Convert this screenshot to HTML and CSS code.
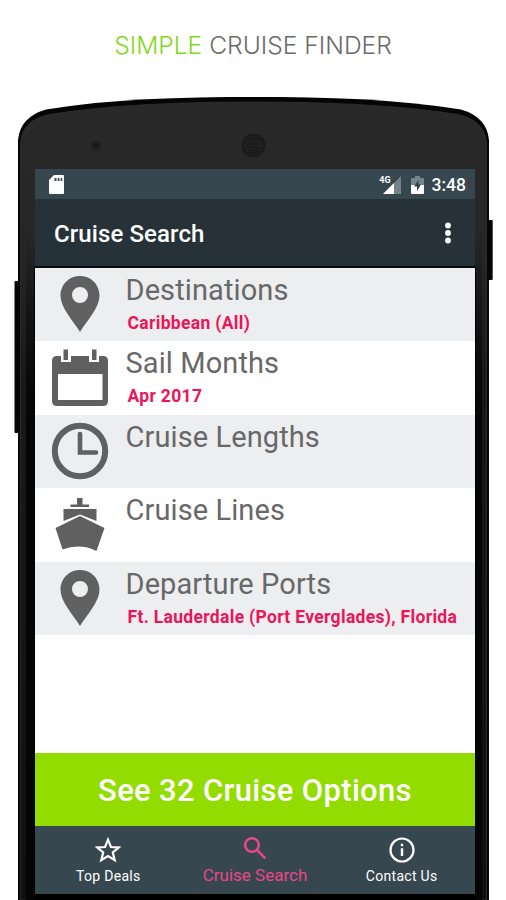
FILE: index.html
```
<!DOCTYPE html>
<html lang="en">
<head>
<meta charset="utf-8">
<title>Simple Cruise Finder</title>
<link rel="stylesheet" href="styles.css">
</head>
<body>
<svg class="device" viewBox="0 0 506 900" aria-hidden="true">
  <defs>
    <linearGradient id="body" x1="0" y1="97" x2="0" y2="900" gradientUnits="userSpaceOnUse">
      <stop offset="0" stop-color="#292929"/><stop offset=".2" stop-color="#262626"/><stop offset=".35" stop-color="#191919"/><stop offset="1" stop-color="#101010"/>
    </linearGradient>
    <linearGradient id="side" x1="0" y1="230" x2="0" y2="420" gradientUnits="userSpaceOnUse">
      <stop offset="0" stop-color="#050505" stop-opacity="0"/><stop offset="1" stop-color="#050505"/>
    </linearGradient>
  </defs>
  <rect x="14.5" y="281" width="6" height="152" rx="1" fill="#050505"/>
  <rect x="487" y="220" width="5.700" height="60" rx="1" fill="#080808"/>
  <path d="M18 900V140Q20 117 46 109.500C110 99 180 97 253.500 97S397 99 461 109.500Q487 117 489 140V900Z" fill="#050505"/>
  <path d="M20.500 900V142Q23 120 49 114.500C110 105 180 102 253.500 102S397 105 458 114.500Q484 120 486.500 142V900Z" fill="url(#body)" stroke="#303030" stroke-width=".8"/>
  <path d="M26 230H35V900H26ZM475 230H482V900H475Z" fill="url(#side)"/>
  <path d="M34 266H476V900H34Z" fill="#000"/>
  <circle cx="96" cy="145.500" r="5" fill="#202020"/><circle cx="96" cy="145.500" r="2.500" fill="#191919"/>
  <circle cx="253.500" cy="145.500" r="12" fill="#1b1b1b"/>
  <g fill="none" stroke="#2c2c2c" stroke-dasharray="1.500 2.500"><circle cx="253.500" cy="145.500" r="9"/><circle cx="253.500" cy="145.500" r="6"/><path d="M244 145.500H263M247 149H260M247 142H260"/></g>
</svg>
<h1 class="headline"><span class="headline-accent">SIMPLE</span> CRUISE FINDER</h1>
<main class="screen">
  <div class="status">
    <svg class="sd" viewBox="0 0 15 19"><path d="M5 0H14Q15 0 15 1V18Q15 19 14 19H1Q0 19 0 18V5Z" fill="#fff"/><path d="M5.500 3H7.500V6H5.500ZM8.700 3H10.500V6H8.700ZM11.700 3H13.300V6H11.700Z" fill="#37474f"/></svg>
    <span class="signal"><span class="network">4G</span><svg viewBox="0 0 18 18"><path d="M18 0V18H0Z" fill="#74828a"/><path d="M11 7V18H0Z" fill="#fff"/></svg></span>
    <svg class="battery" viewBox="0 0 13 18"><path d="M4 0H9V2H12Q13 2 13 3V9H0V3Q0 2 1 2H4Z" fill="#77848a"/><path d="M0 9H13V17Q13 18 12 18H1Q0 18 0 17Z" fill="#fff"/><path d="M7.500 4 3 10.500H6V15L10 8.500H7.500Z" fill="#33424a"/></svg>
    <span class="clock">3:48</span>
  </div>
  <header class="appbar"><h2 class="appbar-title">Cruise Search</h2><svg class="more" viewBox="0 0 6 22"><g fill="#fff"><circle cx="3" cy="3.500" r="2.900"/><circle cx="3" cy="11" r="2.900"/><circle cx="3" cy="18.500" r="2.900"/></g></svg></header>
  <ul class="options">
    <li class="option"><svg class="icon" viewBox="0 0 60 60"><path fill-rule="evenodd" d="M30 2C19 2 10.500 10.700 10.500 21.500C10.500 34 23.500 47 30 58C36.500 47 49.500 34 49.500 21.500C49.500 10.700 41 2 30 2ZM30 13A8 8 0 1 1 30 29A8 8 0 1 1 30 13Z"/></svg><div class="copy"><div class="name">Destinations</div><div class="value">Caribbean (All)</div></div></li>
    <li class="option"><svg class="icon" viewBox="0 0 60 60"><path fill-rule="evenodd" d="M7 9H11V15H21V9H39V15H49V9H53Q58 9 58 14V54Q58 59 53 59H7Q2 59 2 54V14Q2 9 7 9ZM8 27V53H52.500V27Z"/><path d="M13.500 2.500H18V13H13.500ZM42 2.500H46.500V13H42Z"/></svg><div class="copy"><div class="name">Sail Months</div><div class="value">Apr 2017</div></div></li>
    <li class="option"><svg class="icon" viewBox="0 0 60 60"><circle cx="30" cy="30" r="25.200" fill="none" stroke="#606060" stroke-width="6"/><path d="M30 13V31.500H46" fill="none" stroke="#606060" stroke-width="4.600" stroke-linecap="round"/></svg><div class="copy"><div class="name">Cruise Lengths</div></div></li>
    <li class="option"><svg class="icon" viewBox="0 0 60 60"><path d="M27 4H32.500V10.500H39V13H20.500V10.500H27ZM13.500 15H46.500V27L30 20.500 13.500 27ZM30 22 54.500 34 46.500 57Q30 49 12.500 55.500L5.500 34Z"/></svg><div class="copy"><div class="name">Cruise Lines</div></div></li>
    <li class="option"><svg class="icon" viewBox="0 0 60 60"><path fill-rule="evenodd" d="M30 2C19 2 10.500 10.700 10.500 21.500C10.500 34 23.500 47 30 58C36.500 47 49.500 34 49.500 21.500C49.500 10.700 41 2 30 2ZM30 13A8 8 0 1 1 30 29A8 8 0 1 1 30 13Z"/></svg><div class="copy"><div class="name">Departure Ports</div><div class="value">Ft. Lauderdale (Port Everglades), Florida</div></div></li>
  </ul>
  <button class="cta">See 32 Cruise Options</button>
  <nav class="tabs">
    <a class="tab"><svg class="star" viewBox="0 0 24 24"><path d="m12 2.500 2.700 6.700 7.200.5-5.500 4.600 1.800 7L12 17.500l-6.200 3.800 1.800-7-5.500-4.600 7.200-.5Z" fill="none" stroke="#fff" stroke-width="2"/></svg><span>Top Deals</span></a>
    <a class="tab tab-active"><svg class="search" viewBox="0 0 24 24"><g fill="none" stroke="#e8478b" stroke-width="2.300"><circle cx="9.200" cy="9.200" r="6.300"/><path d="m14 14 7.500 7.500"/></g></svg><span>Cruise Search</span></a>
    <a class="tab"><svg class="info" viewBox="0 0 26 26"><circle cx="13" cy="13" r="11.500" fill="none" stroke="#fff" stroke-width="2.200"/><path d="M11.800 6.800H14.200V9.200H11.800ZM11.800 11.200H14.200V19H11.800Z" fill="#fff"/></svg><span>Contact Us</span></a>
  </nav>
</main>
</body>
</html>
```

FILE: styles.css
```
* { box-sizing: border-box; }
body { margin: 0; width: 506px; height: 900px; overflow: hidden; background: #fff; font-family: Roboto, sans-serif; }
svg { display: block; flex: none; }
h1, h2, ul { margin: 0; padding: 0; font-weight: 400; }
.device { position: absolute; inset: 0; width: 506px; height: 900px; z-index: -1; }
.headline { height: 169px; padding-top: 30px; text-align: center; font: 300 24.600px/31px Inter, sans-serif; color: #6b6b6b; white-space: nowrap; }
.headline-accent { color: #83d71c; }
.screen { width: 440px; height: 725px; margin-left: 35px; display: flex; flex-direction: column; background: #fff; }
.status { height: 30px; display: flex; align-items: center; background: #37474f; padding: 1px 9px 0 14px; color: #fff; }
.sd { width: 15px; height: 19px; }
.signal { display: flex; margin-left: auto; margin-right: 10px; }
.signal svg { width: 18px; height: 18px; }
.network { font-size: 9px; line-height: 9px; font-weight: 700; margin-right: -8px; }
.battery { width: 13px; height: 18px; margin-right: 8px; }
.clock { font-size: 17.500px; line-height: 22px; font-weight: 500; }
.appbar { height: 69px; display: flex; align-items: center; justify-content: space-between; padding: 0 24px 0 19px; background: #263238; border-bottom: 2px solid #080d0f; color: #fff; }
.appbar-title { font-size: 24px; font-weight: 500; line-height: 30px; letter-spacing: .1px; padding-top: 2px; }
.more { width: 6px; height: 22px; }
.options { list-style: none; height: 484.500px; flex: none; }
.option { height: 73.400px; display: flex; padding: 6px 0 0 15px; background: #fff; }
.option:nth-child(odd) { background: #eceeef; }
.icon { width: 60px; height: 60px; fill: #606060; }
.copy { margin: -1px 0 0 15.500px; white-space: nowrap; }
.name { font-size: 29px; line-height: 34px; letter-spacing: .1px; color: #686868; }
.value { font-size: 17.500px; line-height: 22px; font-weight: 700; letter-spacing: .32px; color: #ed1459; padding: 5px 0 0 2px; }
.cta { height: 73px; flex: none; border: 0; padding: 3px 0 0; background: #92dc00; color: #fff; font: 500 31px/40px Roboto, sans-serif; letter-spacing: .32px; }
.tabs { flex: 1; display: grid; grid-template-columns: repeat(3, 1fr); background: #37474f; color: #fff; font-size: 14px; }
.tab { display: flex; flex-direction: column; align-items: center; padding-top: 11px; line-height: 18px; letter-spacing: .3px; white-space: nowrap; }
.tab span { margin-top: 4px; }
.tab-active { color: #e8478b; font-size: 17px; letter-spacing: 0; padding-top: 9px; }
.tab-active span { margin-top: 5px; }
.star, .search, .info { width: 26px; height: 26px; }
```
